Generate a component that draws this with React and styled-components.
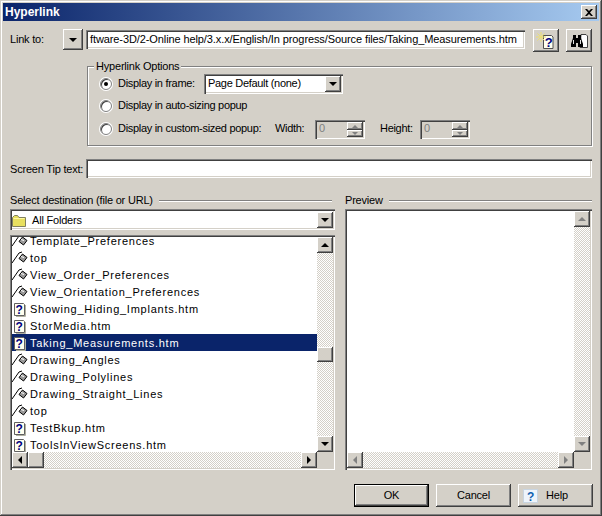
import React from "react";
import styled, { createGlobalStyle, css } from "styled-components";

const GlobalStyle = createGlobalStyle`
  html, body {
    margin: 0;
    padding: 0;
    background: #d4d0c8;
  }
  * {
    box-sizing: border-box;
  }
`;

const sunken = css`
  background: #fff;
  box-shadow: inset 1px 1px #808080, inset 2px 2px #404040, inset -1px -1px #fff,
    inset -2px -2px #d4d0c8;
`;

const raised = css`
  background: #d4d0c8;
  box-shadow: inset -1px -1px #404040, inset 1px 1px #fff, inset -2px -2px #808080,
    inset 2px 2px #d4d0c8;
`;

const dither = css`
  background-color: #d4d0c8;
  background-image: conic-gradient(#fff 25%, #d4d0c8 0 50%, #fff 0 75%, #d4d0c8 0);
  background-size: 2px 2px;
`;

const Window = styled.div`
  width: 602px;
  height: 516px;
  padding: 3px;
  display: flex;
  flex-direction: column;
  overflow: hidden;
  background: #d4d0c8;
  color: #000;
  font-family: "Liberation Sans", Arial, sans-serif;
  font-size: 11px;
  line-height: 13px;
  letter-spacing: -0.2px;
  box-shadow: inset -1px -1px #404040, inset 1px 1px #d4d0c8, inset -2px -2px #808080,
    inset 2px 2px #fff;
`;

const TitleBar = styled.div`
  height: 18px;
  flex: none;
  display: flex;
  align-items: center;
  justify-content: space-between;
  padding: 0 2px;
  background: linear-gradient(90deg, #0a246a, #a6caf0);
  color: #fff;
  font-size: 12px;
  font-weight: 700;
  letter-spacing: 0;
`;

const CloseButton = styled.div`
  ${raised};
  width: 16px;
  height: 14px;
  display: flex;
  align-items: center;
  justify-content: center;
`;

const Body = styled.div`
  flex: 1;
  padding: 8px 7px 0;
  display: flex;
  flex-direction: column;
`;

const LinkRow = styled.div`
  display: flex;
  align-items: flex-start;
  height: 23px;
`;

const LinkLabel = styled.div`
  width: 53px;
  padding-top: 4px;
`;

const ArrowBox = styled.div`
  ${raised};
  flex: none;
  width: ${(p) => p.$w || 16}px;
  height: ${(p) => p.$h || 16}px;
  margin-left: ${(p) => (p.$end ? "auto" : 0)};
  display: flex;
  align-items: center;
  justify-content: center;
`;

const arrowColor = (p) => (p.$off ? "#808080" : "#000");

const Arrow = styled.span`
  width: 0;
  height: 0;
  border-style: solid;
  ${(p) =>
    p.$dir === "up" &&
    css`
      border-width: 0 4px 4px;
      border-color: transparent transparent ${arrowColor(p)};
    `}
  ${(p) =>
    p.$dir === "down" &&
    css`
      border-width: 4px 4px 0;
      border-color: ${arrowColor(p)} transparent transparent;
    `}
  ${(p) =>
    p.$dir === "left" &&
    css`
      border-width: 4px 4px 4px 0;
      border-color: transparent ${arrowColor(p)} transparent transparent;
    `}
  ${(p) =>
    p.$dir === "right" &&
    css`
      border-width: 4px 0 4px 4px;
      border-color: transparent transparent transparent ${arrowColor(p)};
    `}
`;

const SmallArrow = styled(Arrow)`
  border-width: ${(p) => (p.$dir === "up" ? "0 3px 3px" : "3px 3px 0")};
`;

const TextField = styled.div`
  ${sunken};
  height: 19px;
  padding: 3px 4px;
  white-space: nowrap;
  overflow: hidden;
  flex: 1;
  min-width: 0;
  letter-spacing: ${(p) => p.$spacing || 0}px;
  margin-left: ${(p) => p.$ml || 0}px;
  margin-top: ${(p) => p.$mt || 0}px;
`;

const IconButton = styled.div`
  ${raised};
  flex: none;
  width: 26px;
  height: 23px;
  margin-left: ${(p) => p.$ml}px;
  display: flex;
  align-items: center;
  justify-content: center;
`;

const OptionsGroup = styled.div`
  margin: 14px 0 0 77px;
  width: 505px;
  height: 80px;
  padding: 6px 0 0 12px;
  border: 1px solid #808080;
  box-shadow: 1px 1px #fff, inset 1px 1px #fff;
`;

const GroupLegend = styled.div`
  width: fit-content;
  margin: -13px 0 0 -6px;
  padding: 0 2px;
  height: 13px;
  background: #d4d0c8;
`;

const OptionRow = styled.div`
  display: flex;
  align-items: center;
  height: 21px;
  letter-spacing: -0.3px;
  margin-top: ${(p) => p.$mt || 0}px;
`;

const RadioDot = styled.span`
  flex: none;
  width: 12px;
  height: 12px;
  margin-right: 6px;
  border-radius: 50%;
  background: #fff;
  border: 1px solid #808080;
  box-shadow: 0 0 0 1px #fff, inset 1px 1px #404040;
  display: flex;
  align-items: center;
  justify-content: center;

  &::after {
    content: "";
    width: 4px;
    height: 4px;
    border-radius: 50%;
    background: ${(p) => (p.$checked ? "#000" : "transparent")};
  }
`;

const OptionLabel = styled.span`
  flex: none;
  width: ${(p) => p.$w}px;
`;

const ComboBox = styled.div`
  ${sunken};
  display: flex;
  align-items: center;
  justify-content: space-between;
  flex: none;
  width: ${(p) => p.$w}px;
  height: ${(p) => p.$h || 20}px;
  padding: 2px 2px 2px ${(p) => p.$pl || 4}px;
`;

const ComboText = styled.div`
  display: flex;
  align-items: center;
  gap: 5px;
  padding-top: 2px;
`;

const SizeLabel = styled.span`
  flex: none;
  width: 40px;
  margin-left: ${(p) => p.$ml || 0}px;
`;

const SpinBox = styled.div`
  flex: none;
  width: 50px;
  height: 19px;
  margin-top: 2px;
  padding: 2px 2px 2px 4px;
  display: flex;
  justify-content: space-between;
  color: #808080;
  background: #d4d0c8;
  box-shadow: inset 1px 1px #808080, inset 2px 2px #404040, inset -1px -1px #fff;
`;

const SpinButtons = styled.div`
  display: flex;
  flex-direction: column;
`;

const TipRow = styled.div`
  display: flex;
  margin-top: 13px;
`;

const TipLabel = styled.div`
  flex: none;
  width: 76px;
  padding-top: 4px;
  white-space: nowrap;
`;

const Panes = styled.div`
  display: grid;
  grid-template-columns: 325px 247px;
  column-gap: 10px;
  margin-top: 14px;
`;

const Pane = styled.div`
  display: flex;
  flex-direction: column;
`;

const PaneHeader = styled.div`
  display: flex;
  align-items: center;
  height: 17px;
  white-space: nowrap;
`;

const HeaderRule = styled.div`
  flex: 1;
  height: 2px;
  margin: 0 ${(p) => p.$mr || 0}px 0 6px;
  border-top: 1px solid #808080;
  border-bottom: 1px solid #fff;
`;

const ListBox = styled.div`
  ${sunken};
  height: 235px;
  margin-top: 5px;
  padding: 2px;
  display: grid;
  grid-template-columns: 1fr 16px;
  grid-template-rows: 1fr 16px;
  overflow: hidden;
`;

const PreviewBox = styled(ListBox)`
  height: 261px;
  margin-top: 0;
`;

const ListClip = styled.div`
  overflow: hidden;
  min-width: 0;
  min-height: 0;
`;

const FileList = styled.div`
  margin-top: -5px;
`;

const FileRow = styled.div`
  height: 17px;
  display: flex;
  align-items: center;
  white-space: nowrap;
  letter-spacing: 0.75px;
  background: ${(p) => (p.$selected ? "#0a246a" : "transparent")};
  color: ${(p) => (p.$selected ? "#fff" : "#000")};
`;

const RowIcon = styled.span`
  flex: none;
  width: 16px;
  height: 16px;
  margin-right: 2px;
`;

const RowName = styled.span`
  padding-top: 2px;
`;

const VScroll = styled.div`
  ${dither};
  display: flex;
  flex-direction: column;
  justify-content: space-between;
  min-height: 0;
`;

const VThumb = styled.div`
  ${raised};
  height: 15px;
  margin-top: ${(p) => p.$at}px;
  margin-bottom: auto;
`;

const HScroll = styled.div`
  ${dither};
  display: flex;
  min-width: 0;
`;

const HThumb = styled.div`
  ${raised};
  width: 16px;
  margin-right: auto;
`;

const Corner = styled.div`
  background: #d4d0c8;
`;

const Footer = styled.div`
  display: flex;
  justify-content: flex-end;
  gap: 7px;
  margin: 14px -1px 0 0;
`;

const DialogButton = styled.div`
  ${raised};
  width: 75px;
  height: 23px;
  display: flex;
  align-items: center;
  justify-content: center;
  ${(p) =>
    p.$default &&
    css`
      box-shadow: inset 0 0 0 1px #000, inset -2px -2px #404040, inset 2px 2px #fff,
        inset -3px -3px #808080;
    `}
`;

const HelpButton = styled(DialogButton)`
  justify-content: flex-start;
  padding-left: 5px;
  gap: 8px;
`;

const CloseIcon = () => (
  <svg width="8" height="7" viewBox="0 0 8 7">
    <path d="M0 0h2l2 2 2-2h2L5 3.5 8 7H6L4 5 2 7H0l3-3.5z" fill="#000" />
  </svg>
);

const HelpPage = () => (
  <svg width="16" height="16" viewBox="0 0 16 16">
    <path d="M2.5 2.5h9l1 1v11h-10z" fill="#fffff0" stroke="#606060" />
    <path d="M13.5 4v11.5H4" fill="none" stroke="#b0b0a0" />
    <text
      x="7.5"
      y="12.5"
      textAnchor="middle"
      fontFamily="Liberation Sans"
      fontWeight="700"
      fontSize="12"
      fill="#000080"
    >
      ?
    </text>
  </svg>
);

const AnchorLink = () => (
  <svg width="16" height="16" viewBox="0 0 16 16">
    <path d="M0 13L7 3l3-1" stroke="#000" fill="none" />
    <path d="M10.5 4l4.5 3.5-3.5 4.5L7 8.5z" fill="#989898" stroke="#000" />
    <path d="M9 6.5l3 1" stroke="#fff" />
  </svg>
);

const FolderIcon = () => (
  <svg width="15" height="12" viewBox="0 0 15 12">
    <path d="M.5 2.5V11.5h13V2.5H7L5.5.5h-3L1 2z" fill="#e8e060" stroke="#808060" />
    <path d="M1.5 3.5h11" stroke="#fff8a0" />
  </svg>
);

const NewHelpIcon = () => (
  <svg width="20" height="18" viewBox="0 0 20 18">
    <path d="M7.5 3.5h8l1.5 1.5v11.5H7.5z" fill="#fffff0" stroke="#505050" />
    <text
      x="12.5"
      y="14.5"
      textAnchor="middle"
      fontFamily="Liberation Sans"
      fontWeight="700"
      fontSize="13"
      fill="#000080"
    >
      ?
    </text>
    <path d="M5 0v10M0 5h10M1.5 1.5l7 7M8.5 1.5l-7 7" stroke="#eee070" />
  </svg>
);

const BinocularsIcon = () => (
  <svg width="20" height="18" viewBox="0 0 20 18">
    <path d="M12 2.5h5l1.5 1.5v11.5H11z" fill="#fff" stroke="#404040" />
    <path d="M4 3h3v3h2V3h3v3l2 6v3H9v-4H7v4H2v-3l2-6z" fill="#000" />
    <path d="M4.5 8v4M11.5 8v4" stroke="#e0e0e0" />
  </svg>
);

const HelpBadge = () => (
  <svg width="15" height="14" viewBox="0 0 15 14">
    <rect x="0.5" y="0.5" width="14" height="13" fill="#eef4fb" stroke="#c8d4e0" />
    <text
      x="7.5"
      y="11.5"
      textAnchor="middle"
      fontFamily="Liberation Sans"
      fontWeight="700"
      fontSize="12"
      fill="#1060b0"
    >
      ?
    </text>
  </svg>
);

const files = [
  { name: "Template_Preferences", kind: "anchor" },
  { name: "top", kind: "anchor" },
  { name: "View_Order_Preferences", kind: "anchor" },
  { name: "View_Orientation_Preferences", kind: "anchor" },
  { name: "Showing_Hiding_Implants.htm", kind: "page" },
  { name: "StorMedia.htm", kind: "page" },
  { name: "Taking_Measurements.htm", kind: "page", selected: true },
  { name: "Drawing_Angles", kind: "anchor" },
  { name: "Drawing_Polylines", kind: "anchor" },
  { name: "Drawing_Straight_Lines", kind: "anchor" },
  { name: "top", kind: "anchor" },
  { name: "TestBkup.htm", kind: "page" },
  { name: "ToolsInViewScreens.htm", kind: "page" },
];

const Spinner = () => (
  <SpinBox>
    0
    <SpinButtons>
      <ArrowBox $h={8}>
        <SmallArrow $dir="up" $off />
      </ArrowBox>
      <ArrowBox $h={7}>
        <SmallArrow $dir="down" $off />
      </ArrowBox>
    </SpinButtons>
  </SpinBox>
);

const App = () => {
  return (
    <Window>
      <GlobalStyle />
      <TitleBar>
        Hyperlink
        <CloseButton>
          <CloseIcon />
        </CloseButton>
      </TitleBar>
      <Body>
        <LinkRow>
          <LinkLabel>Link to:</LinkLabel>
          <ArrowBox $w={20} $h={21}>
            <Arrow $dir="down" />
          </ArrowBox>
          <TextField $ml={3} $mt={1} $spacing={-0.1}>
            ftware-3D/2-Online help/3.x.x/English/In progress/Source files/Taking_Measurements.htm
          </TextField>
          <IconButton $ml={8}>
            <NewHelpIcon />
          </IconButton>
          <IconButton $ml={7}>
            <BinocularsIcon />
          </IconButton>
        </LinkRow>

        <OptionsGroup>
          <GroupLegend>Hyperlink Options</GroupLegend>
          <OptionRow>
            <RadioDot $checked />
            <OptionLabel $w={86}>Display in frame:</OptionLabel>
            <ComboBox $w={139}>
              Page Default (none)
              <ArrowBox>
                <Arrow $dir="down" />
              </ArrowBox>
            </ComboBox>
          </OptionRow>
          <OptionRow $mt={1}>
            <RadioDot />
            Display in auto-sizing popup
          </OptionRow>
          <OptionRow $mt={2}>
            <RadioDot />
            <OptionLabel $w={157}>Display in custom-sized popup:</OptionLabel>
            <SizeLabel>Width:</SizeLabel>
            <Spinner />
            <SizeLabel $ml={15}>Height:</SizeLabel>
            <Spinner />
          </OptionRow>
        </OptionsGroup>

        <TipRow>
          <TipLabel>Screen Tip text:</TipLabel>
          <TextField />
        </TipRow>

        <Panes>
          <Pane>
            <PaneHeader>
              Select destination (file or URL)
              <HeaderRule $mr={3} />
            </PaneHeader>
            <ComboBox $w={325} $h={21} $pl={2}>
              <ComboText>
                <FolderIcon />
                All Folders
              </ComboText>
              <ArrowBox>
                <Arrow $dir="down" />
              </ArrowBox>
            </ComboBox>
            <ListBox>
              <ListClip>
                <FileList>
                  {files.map((file, i) => (
                    <FileRow key={i} $selected={file.selected}>
                      <RowIcon>{file.kind === "page" ? <HelpPage /> : <AnchorLink />}</RowIcon>
                      <RowName>{file.name}</RowName>
                    </FileRow>
                  ))}
                </FileList>
              </ListClip>
              <VScroll>
                <ArrowBox>
                  <Arrow $dir="up" />
                </ArrowBox>
                <VThumb $at={94} />
                <ArrowBox>
                  <Arrow $dir="down" />
                </ArrowBox>
              </VScroll>
              <HScroll>
                <ArrowBox>
                  <Arrow $dir="left" />
                </ArrowBox>
                <HThumb />
                <ArrowBox>
                  <Arrow $dir="right" />
                </ArrowBox>
              </HScroll>
              <Corner />
            </ListBox>
          </Pane>
          <Pane>
            <PaneHeader>
              Preview
              <HeaderRule />
            </PaneHeader>
            <PreviewBox>
              <ListClip />
              <VScroll>
                <ArrowBox>
                  <Arrow $dir="up" $off />
                </ArrowBox>
                <ArrowBox>
                  <Arrow $dir="down" $off />
                </ArrowBox>
              </VScroll>
              <HScroll>
                <ArrowBox>
                  <Arrow $dir="left" $off />
                </ArrowBox>
                <ArrowBox $end>
                  <Arrow $dir="right" $off />
                </ArrowBox>
              </HScroll>
              <Corner />
            </PreviewBox>
          </Pane>
        </Panes>

        <Footer>
          <DialogButton $default>OK</DialogButton>
          <DialogButton>Cancel</DialogButton>
          <HelpButton>
            <HelpBadge />
            Help
          </HelpButton>
        </Footer>
      </Body>
    </Window>
  );
};

export default App;
